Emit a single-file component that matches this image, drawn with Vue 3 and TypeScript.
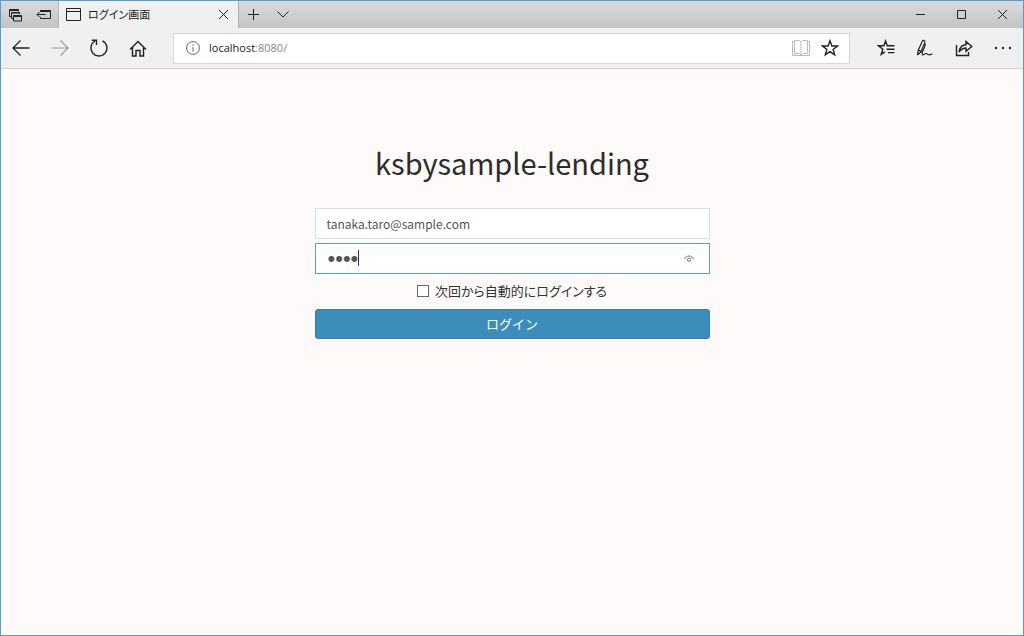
<script setup lang="ts">
import { ref } from 'vue'

const address = ref('localhost:8080/')
const account = ref('tanaka.taro@sample.com')
const password = ref('taro')
const remember = ref(false)
</script>

<template>
  <div class="window">
    <header class="tabstrip">
      <div class="tab-tools">
        <button type="button" aria-label="Tabs you've set aside">
          <svg width="14" height="14" viewBox="0 0 14 14" fill="none" stroke="currentColor">
            <path d="M3 8.500H1.500V1.500H10.500V3.500M1 2.500H10.500M5 10.500H3.500V4.500H11.500V6M3.500 5H11.500M5.500 7.500H13.500V13H5.500ZM5.500 8.500H13.500" />
          </svg>
        </button>
        <button type="button" aria-label="Set these tabs aside">
          <svg width="15" height="13" viewBox="0 0 15 13" fill="none" stroke="currentColor">
            <path d="M4.500 4V2.500H14.500V10.500H4.500V9M4.500 3.500H14.500M9.500 6.500H1M3.500 4L1 6.500L3.500 9" />
          </svg>
        </button>
      </div>
      <div class="tab">
        <svg width="15" height="13" viewBox="0 0 15 13" fill="none" stroke="currentColor">
          <path d="M.5 .5H14.500V12.500H.5ZM.5 3.500H14.500" />
        </svg>
        <span class="tab-title">ログイン画面</span>
        <button type="button" class="tab-close" aria-label="Close tab">
          <svg width="11" height="11" viewBox="0 0 11 11" fill="none" stroke="currentColor">
            <path d="M1 1L10 10M10 1L1 10" />
          </svg>
        </button>
      </div>
      <div class="tab-actions">
        <button type="button" aria-label="New tab">
          <svg width="11" height="11" viewBox="0 0 11 11" fill="none" stroke="currentColor">
            <path d="M5.500 0V11M0 5.500H11" />
          </svg>
        </button>
        <button type="button" aria-label="Show tab previews">
          <svg width="12" height="7" viewBox="0 0 12 7" fill="none" stroke="currentColor">
            <path d="M.5 .5L6 6L11.500 .5" />
          </svg>
        </button>
      </div>
      <div class="window-controls">
        <button type="button" aria-label="Minimize">
          <svg width="9" height="9" viewBox="0 0 9 9" stroke="currentColor"><path d="M0 4.500H9" /></svg>
        </button>
        <button type="button" aria-label="Maximize">
          <svg width="9" height="9" viewBox="0 0 9 9" fill="none" stroke="currentColor"><path d="M.5 .5H8.500V8.500H.5Z" /></svg>
        </button>
        <button type="button" aria-label="Close window">
          <svg width="9" height="9" viewBox="0 0 9 9" stroke="currentColor"><path d="M0 0L9 9M9 0L0 9" /></svg>
        </button>
      </div>
    </header>

    <nav class="toolbar">
      <div class="nav-buttons">
        <button type="button" aria-label="Back">
          <svg width="18" height="16" viewBox="0 0 18 16" fill="none" stroke="currentColor" stroke-width="1.300">
            <path d="M17.500 8H1M8.500 .5L1 8L8.500 15.500" />
          </svg>
        </button>
        <button type="button" class="muted" aria-label="Forward">
          <svg width="18" height="16" viewBox="0 0 18 16" fill="none" stroke="currentColor" stroke-width="1.100">
            <path d="M.5 8H17M9.500 .5L17 8L9.500 15.500" />
          </svg>
        </button>
        <button type="button" aria-label="Refresh">
          <svg width="18" height="18" viewBox="0 0 18 18" fill="none" stroke="currentColor" stroke-width="1.400">
            <path d="M12.500 1.800A8 8 0 1 1 5 2M1.800 1.200H6.500V6" />
          </svg>
        </button>
        <button type="button" aria-label="Home">
          <svg width="18" height="17" viewBox="0 0 18 17" fill="none" stroke="currentColor" stroke-width="1.400">
            <path d="M1 9.500L9 1.500L17 9.500M3.500 7.500V16H7V10.500H11V16H14.500V7.500" />
          </svg>
        </button>
      </div>

      <div class="address">
        <svg class="info" width="14" height="14" viewBox="0 0 14 14" fill="none" stroke="currentColor">
          <circle cx="7" cy="7" r="6.400" />
          <path d="M7 6V10.500M7 3.500V4.800" />
        </svg>
        <div class="address-text">
          <span aria-hidden="true">localhost<span class="port">:8080/</span></span>
          <input v-model="address" type="text" aria-label="Address" />
        </div>
        <button type="button" class="reading" aria-label="Reading view">
          <svg width="18" height="16" viewBox="0 0 18 16" fill="none" stroke="currentColor">
            <path d="M2.500 .5H7.500L9 2L10.500 .5H15.500V13.500H10.500L9 15L7.500 13.500H2.500ZM9 2V15M2.500 1.500H.5V15.500H17.500V1.500H15.500" />
          </svg>
        </button>
        <button type="button" class="favorite" aria-label="Add to favorites">
          <svg width="18" height="18" viewBox="0 0 18 18" fill="none" stroke="currentColor" stroke-width="1.400">
            <path d="M9 1.800L10.900 7H16.500L12.100 10.400L13.700 15.900L9 12.600L4.300 15.900L5.900 10.400L1.500 7H7.100Z" />
          </svg>
        </button>
      </div>

      <div class="tool-buttons">
        <button type="button" aria-label="Hub">
          <svg width="18" height="18" viewBox="0 0 18 18" fill="none" stroke="currentColor" stroke-width="1.400">
            <path d="M12 6.800H10.200L8.500 2L6.800 6.800H1.500L5.800 10.200L4.200 15.400L8 12.800M11 6.800H17.500M9.500 10.200H17.500M11 13.600H17.500" />
          </svg>
        </button>
        <button type="button" aria-label="Make a web note">
          <svg width="17" height="18" viewBox="0 0 17 18" fill="none" stroke="currentColor" stroke-width="1.200">
            <path d="M1.500 16L2.200 11.500L6.300 2.200C7 .7 9.500 1.500 8.800 3.400L5 12.800L1.500 16M2.200 11.500C3.500 11.300 4.300 11.800 5 12.800M8.300 4.800C10.400 4.300 8.600 8.500 6.800 12.100C5.200 15.500 6.400 16.800 8.400 15.200C9.500 14.400 10.300 14.200 11.100 14.900C12.300 16.200 13.600 16.300 16.300 14.700" />
          </svg>
        </button>
        <button type="button" aria-label="Share">
          <svg width="18" height="17" viewBox="0 0 18 17" fill="none" stroke="currentColor" stroke-width="1.400">
            <path d="M1.500 5V15.500H13.500V12M4 12C4.800 7.500 7.200 5 11 4.800V1.500L16.800 6.500L11 11.300V8C8 8 6 9.500 4 12Z" />
          </svg>
        </button>
        <button type="button" aria-label="Settings and more">
          <svg width="18" height="4" viewBox="0 0 18 4" fill="currentColor">
            <circle cx="2" cy="2" r="1.200" /><circle cx="9" cy="2" r="1.200" /><circle cx="16" cy="2" r="1.200" />
          </svg>
        </button>
      </div>
    </nav>

    <main class="page">
      <form class="login" @submit.prevent>
        <h1>ksbysample-lending</h1>
        <input v-model="account" class="field" type="text" aria-label="Email" />
        <div class="field focused">
          <input v-model="password" type="password" aria-label="Password" />
          <span class="caret"></span>
          <button type="button" class="reveal" aria-label="Show password">
            <svg width="10" height="8" viewBox="0 0 10 8" fill="none" stroke="currentColor">
              <path d="M.5 4C2 0 8 0 9.500 4" /><circle cx="5" cy="4.700" r="1.600" />
            </svg>
          </button>
        </div>
        <label class="remember">
          <input v-model="remember" type="checkbox" />
          <span>次回から自動的にログインする</span>
        </label>
        <button type="submit" class="submit">ログイン</button>
      </form>
    </main>
  </div>
</template>

<style>
body {
  margin: 0;
}
</style>

<style scoped>
.window {
  box-sizing: border-box;
  min-height: 100vh;
  display: flex;
  flex-direction: column;
  border: 1px solid #569bd4;
  background: #fefaf9;
  color: #222;
  font-family: "Noto Sans CJK JP", sans-serif;
}

button {
  display: flex;
  align-items: center;
  justify-content: center;
  margin: 0;
  padding: 0;
  border: 0;
  background: none;
  color: inherit;
  font: inherit;
}

input {
  box-sizing: border-box;
  min-width: 0;
  margin: 0;
  font: inherit;
}

svg {
  display: block;
  flex: none;
}

.tabstrip {
  display: flex;
  height: 27px;
  background: linear-gradient(#dadada, #c4c4c4);
}

.tab-tools {
  display: flex;
  box-sizing: border-box;
  width: 58px;
  border-right: 1px solid #b8b8b8;
}

.tab-tools button {
  flex: 1;
}

.tab {
  display: flex;
  align-items: center;
  box-sizing: border-box;
  width: 180px;
  padding: 0 9px 0 7px;
  background: #f0f0f0;
  border-right: 1px solid #b0b0b0;
}

.tab-title {
  flex: 1;
  padding: 0 0 2px 7px;
  font-size: 11px;
  line-height: 16px;
  font-feature-settings: "palt";
}

.tab-actions {
  display: flex;
}

.tab-actions button {
  width: 29px;
}

.window-controls {
  display: flex;
  margin-left: auto;
}

.window-controls button {
  width: 41px;
}

.toolbar {
  display: flex;
  align-items: center;
  box-sizing: border-box;
  height: 41px;
  background: #f0f0f0;
  border-bottom: 1px solid #d2d2d2;
}

.nav-buttons {
  display: flex;
  margin-right: 16px;
}

.nav-buttons button {
  width: 39px;
  height: 32px;
}

.muted {
  color: #999;
}

.address {
  flex: 1;
  display: flex;
  align-items: center;
  box-sizing: border-box;
  height: 31px;
  padding: 0 10px 0 12px;
  border: 1px solid #d6d6d6;
  background: #fff;
}

.info {
  color: #666;
}

.address-text {
  position: relative;
  flex: 1;
  padding-left: 9px;
  font-family: "Open Sans", sans-serif;
  font-size: 11px;
  line-height: 18px;
}

.address-text input {
  position: absolute;
  inset: 0;
  width: 100%;
  padding: 0 0 0 9px;
  border: 0;
  outline: 0;
  background: transparent;
  color: transparent;
}

.port {
  color: #888;
}

.reading {
  margin-right: 11px;
  color: #bbb;
}

.tool-buttons {
  display: flex;
  padding-left: 16px;
}

.tool-buttons button {
  width: 39px;
  height: 32px;
}

.tool-buttons {
  padding-right: 1px;
}

.page {
  flex: 1;
  display: flex;
  justify-content: center;
  padding: 71px 16px 16px;
}

.login {
  width: 100%;
  max-width: 395px;
}

h1 {
  margin: 0 0 24px;
  font-size: 29px;
  font-weight: 400;
  line-height: 44px;
  text-align: center;
  color: #2c2c2c;
}

.field {
  display: flex;
  align-items: center;
  box-sizing: border-box;
  width: 100%;
  height: 31px;
  margin-bottom: 4px;
  padding: 0 11px;
  border: 1px solid #d9dce3;
  border-radius: 0;
  outline: 0;
  background: #fff;
  color: #555;
  font-size: 12px;
}

.focused {
  position: relative;
  padding: 0 10px 0 12px;
  border-color: #5a9dc5;
}

.focused input {
  flex: 1;
  height: 24px;
  padding: 0;
  border: 0;
  outline: 0;
  background: transparent;
  color: #555;
  font-family: "Liberation Sans", sans-serif;
  font-size: 22px;
}

.caret {
  position: absolute;
  left: 42px;
  top: 6px;
  width: 1px;
  height: 16px;
  background: #333;
}

.reveal {
  width: 20px;
  height: 20px;
  color: #777;
}

.remember {
  display: flex;
  align-items: center;
  justify-content: center;
  gap: 6px;
  height: 26px;
  margin: 4px 0 5px;
  font-size: 13px;
  font-feature-settings: "palt";
  color: #333;
}

.remember span {
  padding-bottom: 2px;
}

.remember input {
  appearance: none;
  width: 12px;
  height: 12px;
  border: 1px solid #666;
  background: #fff;
}

.remember input:checked {
  background: #3c8dbc;
}

.submit {
  box-sizing: border-box;
  width: 100%;
  height: 30px;
  padding-bottom: 2px;
  border: 1px solid #367fa9;
  border-radius: 3px;
  background: #3c8dbc;
  color: #fff;
  font-size: 13px;
}
</style>
